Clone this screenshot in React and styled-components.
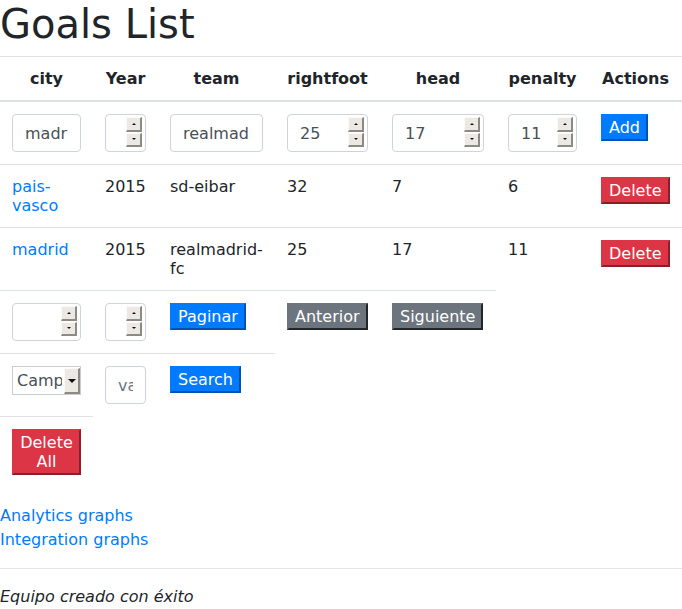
import React from "react";
import styled, { createGlobalStyle } from "styled-components";

const Global = createGlobalStyle`
  *, *::before, *::after { box-sizing: border-box; }
  body {
    margin: 0;
    font-family: "DejaVu Sans", sans-serif;
    font-size: 16px;
    line-height: 1.5;
    color: #212529;
    background: #fff;
  }
`;

const Title = styled.h1`
  margin: 0 0 8px;
  font-size: 40px;
  font-weight: 500;
  line-height: 1.2;
  color: #212529;
`;

const Table = styled.table`
  width: 100%;
  table-layout: fixed;
  border-collapse: collapse;
  margin-bottom: 17px;
  line-height: 19px;
  color: #212529;
`;

const Col = styled.col`
  width: ${(p) => p.$w}px;
`;

const Th = styled.th`
  padding: 12px;
  text-align: center;
  vertical-align: bottom;
  font-weight: 700;
  border-top: 1px solid #dee2e6;
  border-bottom: 2px solid #dee2e6;
`;

const Td = styled.td`
  padding: 12px;
  vertical-align: top;
  text-align: left;
  border-top: 1px solid #dee2e6;
`;

const Link = styled.a`
  color: #007bff;
  text-decoration: none;
`;

const Field = styled.input`
  display: block;
  width: 100%;
  height: 38px;
  padding: 6px 12px;
  font-family: inherit;
  font-size: 16px;
  line-height: 1.5;
  color: #495057;
  background: #fff;
  border: 1px solid #ced4da;
  border-radius: 4px;
  -moz-appearance: textfield;
  &::placeholder { color: #6c757d; }
  &::-webkit-inner-spin-button,
  &::-webkit-outer-spin-button {
    -webkit-appearance: none;
    margin: 0;
  }
`;

const Box = styled.div`
  position: relative;
`;

const Spinner = styled.div`
  position: absolute;
  top: 3px;
  right: 4px;
  width: 16px;
  height: 30px;
  display: flex;
  flex-direction: column;
  gap: 1px;
`;

const SpinHalf = styled.span`
  flex: 1;
  display: flex;
  align-items: center;
  justify-content: center;
  background: #ece9e5;
  border-top: 1px solid #fbfaf9;
  border-left: 1px solid #fbfaf9;
  border-right: 2px solid #8d8a86;
  border-bottom: 2px solid #8d8a86;
  &::after {
    content: "";
    width: 0;
    height: 0;
    border-left: 2px solid transparent;
    border-right: 2px solid transparent;
    ${(p) =>
      p.$up
        ? "border-bottom: 2px solid #111;"
        : "border-top: 2px solid #111;"}
  }
`;

const NumberField = (props) => (
  <Box>
    <Field type="number" {...props} />
    <Spinner aria-hidden="true">
      <SpinHalf $up />
      <SpinHalf />
    </Spinner>
  </Box>
);

const Picker = styled.select`
  display: block;
  width: 100%;
  height: 29px;
  padding: 0 18px 0 4px;
  font-family: inherit;
  font-size: 16px;
  color: #495057;
  background: #fff;
  border: 1px solid #c9cdd2;
  border-radius: 0;
  appearance: none;
  -webkit-appearance: none;
`;

const DropButton = styled.span`
  position: absolute;
  top: 2px;
  right: 1px;
  bottom: 1px;
  width: 16px;
  display: flex;
  align-items: center;
  justify-content: center;
  background: #ece9e5;
  border-top: 1px solid #fbfaf9;
  border-left: 1px solid #fbfaf9;
  border-right: 2px solid #8d8a86;
  border-bottom: 2px solid #8d8a86;
  pointer-events: none;
  &::after {
    content: "";
    border-left: 4px solid transparent;
    border-right: 4px solid transparent;
    border-top: 4px solid #111;
  }
`;

const COLORS = { primary: "#007bff", danger: "#dc3545", secondary: "#6c757d" };

const Btn = styled.button`
  font-family: inherit;
  font-size: 16px;
  line-height: 19px;
  padding: 2px 6px;
  color: #fff;
  background: ${(p) => COLORS[p.$v]};
  border: 2px outset ${(p) => COLORS[p.$v]};
  border-radius: 0;
  cursor: pointer;
`;

const Links = styled.div`
  display: flex;
  flex-direction: column;
  align-items: flex-start;
  line-height: 24px;
`;

const Rule = styled.hr`
  margin: 16px 0;
  border: 0;
  border-top: 1px solid rgba(0, 0, 0, 0.1);
`;

const Message = styled.p`
  margin: 0;
  font-style: italic;
`;

const widths = [93, 65, 117, 105, 116, 93, 93];
const heads = ["city", "Year", "team", "rightfoot", "head", "penalty", "Actions"];
const rows = [
  ["pais-vasco", "2015", "sd-eibar", "32", "7", "6"],
  ["madrid", "2015", "realmadrid-fc", "25", "17", "11"],
];

export default function App() {
  return (
    <>
      <Global />
      <Title>Goals List</Title>
      <Table>
        <colgroup>
          {widths.map((w, i) => (
            <Col key={i} $w={w} />
          ))}
        </colgroup>
        <thead>
          <tr>
            {heads.map((h) => (
              <Th key={h}>{h}</Th>
            ))}
          </tr>
        </thead>
        <tbody>
          <tr>
            <Td><Field type="text" defaultValue="madrid" /></Td>
            <Td><NumberField /></Td>
            <Td><Field type="text" defaultValue="realmadrid-fc" /></Td>
            <Td><NumberField defaultValue="25" /></Td>
            <Td><NumberField defaultValue="17" /></Td>
            <Td><NumberField defaultValue="11" /></Td>
            <Td><Btn $v="primary">Add</Btn></Td>
          </tr>
          {rows.map((r) => (
            <tr key={r[0]}>
              <Td><Link href="#">{r[0]}</Link></Td>
              {r.slice(1).map((c, i) => (
                <Td key={i}>{c}</Td>
              ))}
              <Td><Btn $v="danger">Delete</Btn></Td>
            </tr>
          ))}
          <tr>
            <Td><NumberField /></Td>
            <Td><NumberField /></Td>
            <Td><Btn $v="primary">Paginar</Btn></Td>
            <Td><Btn $v="secondary">Anterior</Btn></Td>
            <Td><Btn $v="secondary">Siguiente</Btn></Td>
          </tr>
          <tr>
            <Td>
              <Box>
                <Picker defaultValue="campo">
                  <option value="campo">Campo</option>
                </Picker>
                <DropButton aria-hidden="true" />
              </Box>
            </Td>
            <Td><Field type="text" placeholder="valor" /></Td>
            <Td><Btn $v="primary">Search</Btn></Td>
          </tr>
          <tr>
            <Td><Btn $v="danger">Delete All</Btn></Td>
          </tr>
        </tbody>
      </Table>
      <Links>
        <Link href="#">Analytics graphs</Link>
        <Link href="#">Integration graphs</Link>
      </Links>
      <Rule />
      <Message>Equipo creado con éxito</Message>
    </>
  );
}
